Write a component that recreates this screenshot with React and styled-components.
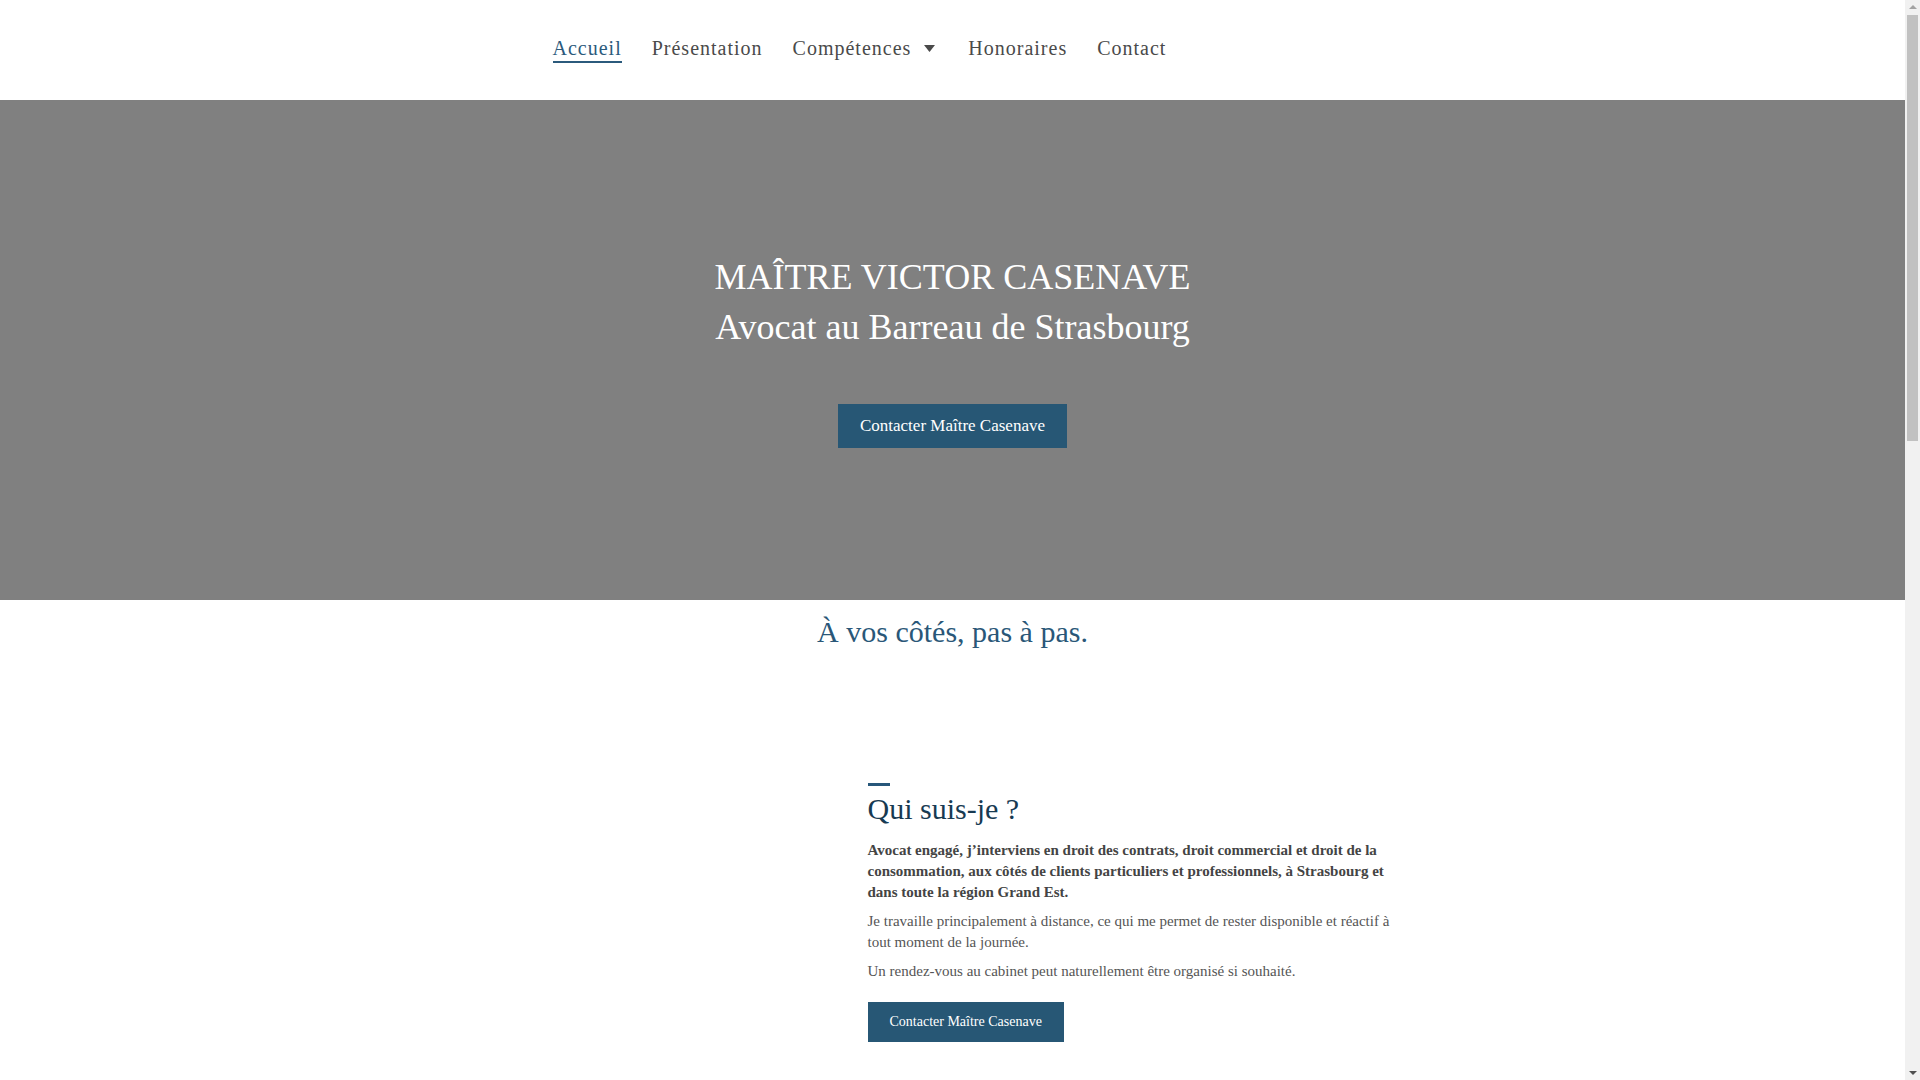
import styled, { createGlobalStyle } from "styled-components";

const GlobalStyle = createGlobalStyle`
	* {
		box-sizing: border-box;
	}
	body {
		margin: 0;
		background: #ffffff;
		font-family: "Liberation Serif", "Times New Roman", serif;
		color: #4a4a4a;
	}
`;

// the page keeps a 15px gutter on the right for the scroll bar
const Page = styled.div`
	width: calc(100% - 15px);
	min-height: 2650px;
`;

const ScrollGutter = styled.div`
	position: fixed;
	top: 0;
	right: 0;
	width: 15px;
	height: 100vh;
	background: #f1f1f1;
	display: flex;
	flex-direction: column;
	align-items: center;
`;

const ScrollArrow = styled.div`
	width: 0;
	height: 0;
	margin: 5px 0;
	border-left: 4px solid transparent;
	border-right: 4px solid transparent;
	${(p) =>
		p.$down
			? "border-top: 4px solid #505050; margin-top: auto;"
			: "border-bottom: 4px solid #a3a3a3;"}
`;

const ScrollThumb = styled.div`
	width: 11px;
	height: 426px;
	margin-top: 1px;
	background: #c1c1c1;
`;

// header with the (empty) brand area and the main menu
const Header = styled.header`
	height: 100px;
	background: #ffffff;
`;

const HeaderInner = styled.div`
	max-width: 1140px;
	margin: 0 auto;
	height: 100%;
	display: flex;
	align-items: flex-start;
	padding-top: 36px;
`;

const Brand = styled.div`
	width: 170px;
	flex-shrink: 0;
`;

const Nav = styled.nav`
	display: flex;
	align-items: center;
	gap: 30px;
`;

const NavLink = styled.a`
	display: inline-flex;
	align-items: center;
	font-size: 20px;
	line-height: 24px;
	letter-spacing: 1px;
	text-decoration: none;
	cursor: pointer;
	color: ${(p) => (p.$active ? "#2b5a7c" : "#4a4a4a")};
	padding-bottom: 1px;
	border-bottom: 2px solid ${(p) => (p.$active ? "#2b5a7c" : "transparent")};
	svg {
		margin-left: 13px;
		margin-right: 3px;
	}
`;

const Hero = styled.section`
	height: 500px;
	background: #808080;
	display: flex;
	flex-direction: column;
	align-items: center;
	justify-content: center;
	text-align: center;
`;

const HeroTitle = styled.h1`
	margin: 0;
	font-size: 36px;
	line-height: 50px;
	font-weight: 400;
	color: #ffffff;
`;

const Button = styled.button`
	font-family: inherit;
	border: none;
	cursor: pointer;
	background: #275775;
	color: #ffffff;
	padding: 0 22px;
	height: ${(p) => (p.$small ? "40px" : "44px")};
	font-size: ${(p) => (p.$small ? "14px" : "17px")};
`;

const HeroButton = styled(Button)`
	margin-top: 52px;
`;

const Tagline = styled.h2`
	margin: 14px 0 0;
	text-align: center;
	font-size: 30px;
	line-height: 36px;
	font-weight: 400;
	color: #2a5778;
`;

const About = styled.section`
	padding-top: 133px;
`;

const AboutGrid = styled.div`
	width: 1080px;
	margin: 0 auto;
	display: grid;
	grid-template-columns: 455px 540px;
`;

const Accent = styled.div`
	width: 22px;
	height: 3px;
	background: #27577a;
	margin-bottom: 5px;
`;

const AboutTitle = styled.h3`
	margin: 0 0 13px;
	font-size: 30px;
	line-height: 36px;
	font-weight: 400;
	color: #173a52;
`;

const Text = styled.p`
	margin: 0 0 8px;
	font-size: 15px;
	line-height: 21px;
	font-weight: ${(p) => (p.$strong ? 700 : 400)};
	color: ${(p) => (p.$strong ? "#444444" : "#555555")};
`;

const Actions = styled.div`
	padding-top: 12px;
`;

const Caret = () => (
	<svg width="11" height="7" viewBox="0 0 11 7">
		<path d="M0 0 H11 L5.5 7 Z" fill="#4a4a4a" />
	</svg>
);

const links = [
	{ label: "Accueil", active: true },
	{ label: "Présentation" },
	{ label: "Compétences", caret: true },
	{ label: "Honoraires" },
	{ label: "Contact" },
];

const App = () => {
	return (
		<Page>
			<GlobalStyle />
			<Header>
				<HeaderInner>
					<Brand />
					<Nav>
						{links.map((l) => (
							<NavLink key={l.label} $active={l.active}>
								{l.label}
								{l.caret && <Caret />}
							</NavLink>
						))}
					</Nav>
				</HeaderInner>
			</Header>
			<Hero>
				<HeroTitle>
					MAÎTRE VICTOR CASENAVE
					<br />
					Avocat au Barreau de Strasbourg
				</HeroTitle>
				<HeroButton>Contacter Maître Casenave</HeroButton>
			</Hero>
			<Tagline>À vos côtés, pas à pas.</Tagline>
			<About>
				<AboutGrid>
					<div />
					<div>
						<Accent />
						<AboutTitle>Qui suis-je ?</AboutTitle>
						<Text $strong>
							Avocat engagé, j’interviens en droit des contrats, droit commercial et droit de la consommation, aux côtés de clients particuliers et professionnels, à Strasbourg et dans toute la région Grand Est.
						</Text>
						<Text>Je travaille principalement à distance, ce qui me permet de rester disponible et réactif à tout moment de la journée.</Text>
						<Text>Un rendez-vous au cabinet peut naturellement être organisé si souhaité.</Text>
						<Actions>
							<Button $small>Contacter Maître Casenave</Button>
						</Actions>
					</div>
				</AboutGrid>
			</About>
			<ScrollGutter>
				<ScrollArrow />
				<ScrollThumb />
				<ScrollArrow $down />
			</ScrollGutter>
		</Page>
	);
};

export default App;
